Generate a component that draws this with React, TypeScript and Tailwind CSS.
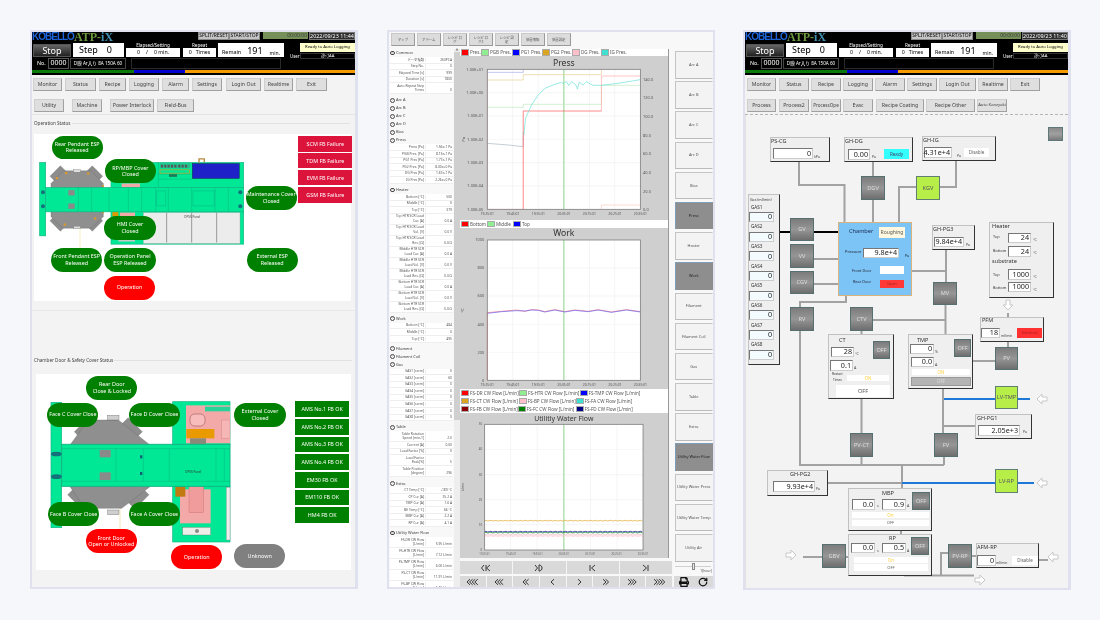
import React from "react";
import { RotateCw } from "lucide-react";
import { FaPrint } from "react-icons/fa";

type R = [number, number, number, number];
const box = (r: R, ox: number, oy: number, s = 1): React.CSSProperties => ({
  left: (r[0] - ox) / s,
  top: (r[1] - oy) / s,
  width: (r[2] - r[0]) / s,
  height: (r[3] - r[1]) / s,
});

function Header({ date }: { date: string }) {
  return (
    <div className="bg-black h-[43px] w-full flex flex-col text-white shrink-0 overflow-hidden">
      <div className="h-[10px] flex items-start">
        <div className="w-[166px] h-[10px] flex items-center font-bold leading-[10px]">
          <span className="text-[10px] text-[#1f63d8] tracking-[-1px] w-[42px] font-['Liberation_Sans',sans-serif]">KOBELLO</span>
          <span className="text-[12px] text-[#6b9a3c] font-['Liberation_Serif',serif]">ATP-<span className="text-[#3f8fb0]">iX</span></span>
        </div>
        <div className="w-[31px] h-[8px] bg-[#c4c4c4] text-black text-[4.9px] flex items-center justify-center border border-[#888] whitespace-nowrap">SPLIT/RESET</div>
        <div className="w-[31px] h-[8px] bg-[#c4c4c4] text-black text-[4.9px] flex items-center justify-center border border-[#888] whitespace-nowrap">START/STOP</div>
        <div className="ml-[3px] w-[45px] h-[7px] bg-[#76905a] text-[#3c3c3c] text-[5px] flex items-center justify-end pr-[1px]">00:00:00</div>
        <div className="ml-[1px] w-[46px] h-[8px] bg-[#2e2e2e] text-white text-[5.4px] flex items-center justify-center border border-[#777] whitespace-nowrap">{date}</div>
      </div>
      <div className="flex h-[27px]">
        <div className="w-[257px] flex flex-col">
          <div className="flex h-[15px] items-end pl-[1px] text-black">
            <div className="w-[38px] h-[13px] bg-gradient-to-b from-[#666] to-[#222] border border-[#555] text-white text-[9px] flex items-center justify-center">Stop</div>
            <div className="ml-[2px] w-[51px] h-[14px] bg-white text-[9px] flex items-center justify-between px-[6px]"><span>Step</span><span className="mr-[6px]">0</span></div>
            <div className="ml-[2px] w-[54px] h-[15px] flex flex-col items-center">
              <span className="text-white text-[4.6px] leading-[6px]">Elapsed/Setting</span>
              <span className="w-full h-[9px] bg-white text-[5.2px] flex items-center justify-center gap-[6px]"><span>0</span><span>/</span><span>0 min.</span></span>
            </div>
            <div className="ml-[3px] w-[33px] h-[15px] flex flex-col items-center">
              <span className="text-white text-[4.6px] leading-[6px]">Repeat</span>
              <span className="w-full h-[9px] bg-white text-[5.2px] flex items-center justify-center gap-[4px]"><span>0</span><span>Times</span></span>
            </div>
            <div className="ml-[2px] w-[66px] h-[14px] bg-white flex items-end justify-between px-[4px] pb-[1px]">
              <span className="text-[5.4px] leading-[7px]">Remain</span>
              <span className="text-[9px] leading-[11px] ml-auto mr-[7px]">191</span>
              <span className="text-[5px] leading-[6px]">min.</span>
            </div>
          </div>
          <div className="flex h-[12px] items-center mt-[0.5px]">
            <span className="ml-[5px] w-[11px] text-[5.4px]">No.</span>
            <div className="w-[21px] h-[11px] border border-[#555] text-[7px] flex items-center justify-center">0000</div>
            <div className="ml-[1px] w-[56px] h-[11px] border border-[#444] text-[4.6px] flex items-center justify-center whitespace-nowrap">D膜 Ar入り 8A 150A 60</div>
            <div className="ml-[5px] w-[150px] h-[11px] border border-[#2a2a2a]" />
          </div>
        </div>
        <div className="flex-1 flex flex-col pt-[1px]">
          <div className="ml-[11px] h-[9px] bg-[#ffffcc] text-black text-[4.2px] flex items-center justify-center whitespace-nowrap">Ready to Auto Logging</div>
          <div className="flex items-center mt-[1px] h-[6px]">
            <span className="ml-[1px] w-[10px] text-[4.4px]">User</span>
            <div className="flex-1 h-[6px] border border-[#333] text-[4.2px] leading-[4px] flex items-center justify-center">ｽﾀｯﾌAA</div>
          </div>
        </div>
      </div>
      <div className="flex h-[3px] mt-[1px] shrink-0">
        <div className="w-[102px] bg-[#0a7a0a]" />
        <div className="w-[51px] bg-[#0000d0]" />
        <div className="flex-1 bg-[#f59a00]" />
      </div>
    </div>
  );
}

const NB0 = "h-[13px] shrink-0 bg-[#dfdfdf] border border-[#cfcfcf] border-r-[#a0a0a0] border-b-[#a0a0a0] text-[#444] flex items-center justify-center whitespace-nowrap";
const NB = NB0 + " text-[5.2px]";

function MachineTop() {
  const m = "#00e896";
  const e = "#12b585";
  return (
    <svg className="absolute inset-0" width={317} height={167} viewBox="27 30 951 500">
      <line x1={165} y1={310} x2={165} y2={375} stroke="#f0e8a0" strokeWidth={2} />
      <g fill="#8d8d8d" stroke="#6f6f6f">
        <rect x={85} y={132} width={38} height={44} transform="rotate(45 104 154)" />
        <rect x={185} y={132} width={38} height={44} transform="rotate(-45 204 154)" />
        <rect x={85} y={270} width={38} height={44} transform="rotate(-45 104 292)" />
        <rect x={185} y={270} width={38} height={44} transform="rotate(45 204 292)" />
      </g>
      <polygon points="115,140 198,140 235,178 235,278 198,312 115,312 78,278 78,178" fill="#8f8f8f" stroke="#666" />
      <rect x={146} y={136} width={20} height={8} fill="#ddd" stroke="#777" />
      <rect x={146} y={306} width={20} height={8} fill="#ddd" stroke="#777" />
      <g fill="#e09a20">
        <rect x={92} y={159} width={7} height={6} />
        <rect x={120} y={144} width={7} height={6} />
        <rect x={186} y={145} width={7} height={6} />
        <rect x={232} y={183} width={5} height={5} />
        <rect x={232} y={262} width={5} height={5} />
        <rect x={207} y={280} width={7} height={6} />
        <rect x={116} y={298} width={7} height={6} />
      </g>
      <rect x={44} y={115} width={18} height={220} fill={m} stroke={e} strokeWidth={2} />
      <rect x={258} y={115} width={398} height={76} fill={m} stroke={e} strokeWidth={2} />
      <path d="M400 115V190M400 165H500M400 150H500" stroke="#0a9a70" fill="none" />
      <rect x={405} y={118} width={90} height={14} fill="#2ab98a" />
      <g fill="#555">{[408, 418, 428, 438, 448, 460, 470, 480].map((x) => <rect key={x} x={x} y={122} width={6} height={8} />)}</g>
      <rect x={405} y={137} width={88} height={10} fill="none" stroke="#e09a20" strokeWidth={2} />
      <rect x={432} y={150} width={24} height={8} fill="#1a7a5a" />
      <rect x={502} y={118} width={141} height={45} fill="#2020c8" stroke="#111" />
      <path d="M522 116V104H538V114" stroke="#b88a40" strokeWidth={4} fill="none" />
      <rect x={290} y={178} width={55} height={12} fill="#f4a9a9" />
      <rect x={258} y={262} width={398} height={98} fill={m} stroke={e} strokeWidth={2} />
      <rect x={355} y={265} width={290} height={93} fill="#ececec" stroke="#999" />
      <path d="M425 265V355M500 265V355M575 265V355" stroke="#9a9a9a" strokeWidth={3} />
      <text x={478} y={283} fontSize={9} fill="#444">DPSS Panel</text>
      <rect x={262} y={263} width={18} height={14} fill="#e09a00" />
      <rect x={285} y={265} width={45} height={12} fill="#f4a9a9" />
      <rect x={280} y={340} width={50} height={12} fill="#c8c8c8" />
      <rect x={62} y={190} width={594} height={73} fill={m} stroke={e} strokeWidth={2} />
      <path d="M160 190V263M200 190V263M252 190V263M310 190V263M350 190V263M392 190V263M430 190V263M500 190V263M570 190V263M610 190V263M504 200H568V245H504ZM395 200H422V245H395Z" stroke="#0c9e75" fill="none" />
      <rect x={130} y={198} width={19} height={16} fill="#8a8a8a" />
      <rect x={130} y={238} width={19} height={16} fill="#8a8a8a" />
      <g fill="#14707a">
        <circle cx={54} cy={204} r={6} /><circle cx={54} cy={246} r={6} /><circle cx={646} cy={204} r={6} /><circle cx={646} cy={246} r={6} />
      </g>
    </svg>
  );
}

function MachineBottom() {
  const m = "#00e896";
  const e = "#12b585";
  return (
    <svg className="absolute inset-0" width={315} height={196} viewBox="33 102 945 588">
      <line x1={285} y1={500} x2={285} y2={600} stroke="#f0d890" strokeWidth={2} />
      <g fill="#8d8d8d" stroke="#666">
        <rect x={150} y={250} width={60} height={30} transform="rotate(-45 180 265)" />
        <rect x={290} y={250} width={60} height={30} transform="rotate(45 320 265)" />
        <rect x={130} y={460} width={60} height={30} transform="rotate(45 160 475)" />
        <rect x={310} y={460} width={60} height={30} transform="rotate(-45 340 475)" />
      </g>
      <polygon points="190,240 280,240 375,315 375,440 290,505 180,505 135,440 135,315" fill="#8f8f8f" stroke="#666" />
      <rect x={248} y={226} width={34} height={14} fill="#cfcfcf" stroke="#555" />
      <rect x={248} y={510} width={34} height={14} fill="#cfcfcf" stroke="#555" />
      <rect x={78} y={187} width={32} height={376} fill={m} stroke={e} strokeWidth={2} />
      <rect x={443} y={185} width={172} height={130} fill={m} stroke={e} strokeWidth={2} />
      <rect x={483} y={196} width={132} height={114} fill="#f4a9a9" />
      <rect x={495} y={222} width={45} height={36} rx={14} fill="#f8bcbc" stroke="#a86060" strokeWidth={2} />
      <rect x={540} y={200} width={75} height={14} fill="#2ad29a" />
      <rect x={590} y={240} width={25} height={55} fill="#f7b6b6" stroke="#c47c7c" />
      <rect x={484} y={267} width={84} height={28} fill="#e89a00" />
      <rect x={495} y={295} width={48} height={18} fill="#8a8a7a" />
      <rect x={443} y={438} width={172} height={168} fill={m} stroke={e} strokeWidth={2} />
      <rect x={465} y={448} width={92} height={102} fill="#f4a9a9" />
      <rect x={492} y={438} width={44} height={80} fill="#f09c9c" stroke="#c06060" />
      <rect x={451} y={440} width={30} height={30} fill="#c07a10" />
      <rect x={473} y={562} width={84} height={23} fill="#eeeee8" stroke="#666" />
      <circle cx={516} cy={573} r={6} fill="#888" />
      <rect x={604} y={442} width={11} height={158} fill="#eee" stroke="#888" />
      <rect x={110} y={313} width={505} height={126} fill={m} stroke={e} strokeWidth={3} />
      <path d="M110 326H615M110 424H615M273 326V424M355 326V424M433 326V424M573 326V424M598 326V424" stroke="#0c9e75" fill="none" />
      <rect x={224} y={330} width={33} height={22} fill="#8a8a8a" />
      <rect x={224} y={397} width={33} height={23} fill="#8a8a8a" />
      <rect x={345} y={346} width={7} height={9} fill="#11607a" />
      <rect x={345} y={396} width={7} height={9} fill="#11607a" />
      <text x={481} y={399} fontSize={9} fill="#333">DPSS Panel</text>
      <g fill="#14707a"><ellipse cx={94} cy={342} rx={16} ry={7} /><ellipse cx={94} cy={410} rx={16} ry={7} /></g>
    </svg>
  );
}

type Pill = { t: string[]; r: R; c?: string };
const top1: Pill[] = [
  { t: ["Rear Pendant ESP", "Released"], r: [80, 35, 233, 106] },
  { t: ["RP/MBP Cover", "Closed"], r: [240, 105, 392, 178] },
  { t: ["Maintenance Cover", "Closed"], r: [662, 185, 815, 257] },
  { t: ["HMI Cover", "Closed"], r: [238, 275, 392, 348] },
  { t: ["Front Pendant ESP", "Released"], r: [78, 372, 232, 443] },
  { t: ["Operation Panel", "ESP Released"], r: [238, 372, 392, 443] },
  { t: ["External ESP", "Released"], r: [665, 372, 818, 443] },
  { t: ["Operation"], r: [237, 455, 390, 527], c: "bg-[#ff0000]" },
];
const bot1: Pill[] = [
  { t: ["Rear Door", "Close &  Locked"], r: [184, 107, 337, 180] },
  { t: ["Face C Cover Close"], r: [67, 188, 220, 260] },
  { t: ["Face D Cover Close"], r: [312, 188, 465, 260] },
  { t: ["External Cover", "Closed"], r: [628, 188, 782, 260] },
  { t: ["Face B Cover Close"], r: [70, 487, 222, 558] },
  { t: ["Face A Cover Close"], r: [312, 487, 465, 558] },
  { t: ["Front Door", "Open or Unlocked"], r: [182, 568, 336, 640], c: "bg-[#ff0000]" },
  { t: ["Operation"], r: [438, 615, 592, 687], c: "bg-[#ff0000]" },
  { t: ["Unknown"], r: [627, 612, 781, 684], c: "bg-[#808080]" },
];
const reds: [string, R][] = [
  ["SCM FB Failure", [820, 36, 982, 83]],
  ["TDM FB Failure", [820, 87, 982, 133]],
  ["EVM FB Failure", [820, 138, 982, 184]],
  ["GSM FB Failure", [820, 190, 982, 236]],
];
const greens: [string, R][] = [
  ["AMS No.1 FB OK", [810, 183, 973, 231]],
  ["AMS No.2 FB OK", [810, 237, 973, 284]],
  ["AMS No.3 FB OK", [810, 290, 973, 337]],
  ["AMS No.4 FB OK", [810, 343, 973, 390]],
  ["EM30 FB OK", [810, 396, 973, 443]],
  ["EM110 FB OK", [810, 449, 973, 495]],
  ["HM4 FB OK", [810, 502, 973, 548]],
];

function PillList({ list, ox, oy }: { list: Pill[]; ox: number; oy: number }) {
  return (
    <>
      {list.map((p) => (
        <div key={p.t.join() + p.r[0]} style={box(p.r, ox, oy, 3)} className={"absolute rounded-full text-white text-[5.4px] leading-[6.5px] flex flex-col items-center justify-center text-center whitespace-nowrap " + (p.c ?? "bg-[#008000]")}>
          {p.t.map((l) => <span key={l}>{l}</span>)}
        </div>
      ))}
    </>
  );
}
function RectList({ list, ox, oy, c }: { list: [string, R][]; ox: number; oy: number; c: string }) {
  return (
    <>
      {list.map(([t, r]) => (
        <div key={t} style={box(r, ox, oy, 3)} className={"absolute text-white text-[5.4px] flex items-center justify-center whitespace-nowrap " + c}>{t}</div>
      ))}
    </>
  );
}

function SectionTitle({ t, w }: { t: string; w: string }) {
  return (
    <div className={"flex items-center h-[8px] ml-[2px] " + w}>
      <span className="text-[4.6px] text-[#444] whitespace-nowrap pr-[1px]">{t}</span>
      <span className="flex-1 h-px bg-[#e2e2e2]" />
    </div>
  );
}

function Panel1() {
  return (
    <div className="w-[328px] h-[559px] border-2 border-r-[3px] border-[#dfe2ee] bg-[#f3f3f3] flex flex-col overflow-hidden shrink-0">
      <Header date="2022/09/23 11:44" />
      <div className="flex gap-[3px] mt-[3px] pl-[1px]">
        <div className={NB + " w-[29px]"}>Monitor</div>
        <div className={NB + " w-[31px]"}>Status</div>
        <div className={NB + " w-[27px]"}>Recipe</div>
        <div className={NB + " w-[30px]"}>Logging</div>
        <div className={NB + " w-[27px]"}>Alarm</div>
        <div className={NB + " w-[30px]"}>Settings</div>
        <div className={NB + " w-[35px] ml-[1px]"}>Login Out</div>
        <div className={NB + " w-[29px]"}>Realtime</div>
        <div className={NB + " w-[31px]"}>Exit</div>
      </div>
      <div className="flex mt-[8px] pl-[2px]">
        <div className={NB + " w-[30px]"}>Utility</div>
        <div className={NB + " w-[30px] ml-[8px]"}>Machine</div>
        <div className={NB + " w-[44px] ml-[8px]"}>Power Interlock</div>
        <div className={NB + " w-[37px] ml-[3px]"}>Field-Bus</div>
      </div>
      <div className="h-px bg-[#e4e4e4] mt-[2px]" />
      <div className="mt-[4px]"><SectionTitle t="Operation Status" w="w-[316px]" /></div>
      <div className="relative bg-white w-[317px] h-[167px] ml-[2px] mt-[7px] shrink-0">
        <MachineTop />
        <PillList list={top1} ox={27} oy={30} />
        <RectList list={reds} ox={27} oy={30} c="bg-[#dc143c]" />
      </div>
      <div className="h-px bg-[#e8e8e8] mt-[9px]" />
      <div className="mt-[45px]"><SectionTitle t="Chamber Door & Safety Cover Status" w="w-[318px]" /></div>
      <div className="relative bg-white w-[315px] h-[196px] ml-[4px] mt-[10px] shrink-0">
        <MachineBottom />
        <PillList list={bot1} ox={33} oy={102} />
        <RectList list={greens} ox={33} oy={102} c="bg-[#008000]" />
      </div>
    </div>
  );
}

type G = { g: string; rows?: [string, string][]; };
const tree: G[] = [
  { g: "Common", rows: [["データ種類", "260PCA"], ["Step No.", "0"], ["Elapsed Time [s]", "999"], ["Duration [s]", "1800"], ["Auto Repeat Step Times", "0"]] },
  { g: "Arc A" }, { g: "Arc B" }, { g: "Arc C" }, { g: "Arc D" }, { g: "Bias" },
  { g: "Press", rows: [["Press [Pa]", "1.56e-1 Pa"], ["PGB Pres. [Pa]", "8.13e-1 Pa"], ["PG1 Pres [Pa]", "1.77e-1 Pa"], ["PG2 Pres. [Pa]", "8.00e+0 Pa"], ["DG Pres [Pa]", "1.67e-1 Pa"], ["IG Pres [Pa]", "2.26e+0 Pa"]] },
  { g: "Heater", rows: [["Bottom [°C]", "500"], ["Middle [°C]", "0"], ["Top [°C]", "379"], ["Top HTR SCR Load Cur. [A]", "0.0 A"], ["Top HTR SCR Load Vol. [V]", "0.0 V"], ["Top HTR SCR Load Res. [Ω]", "0.0 Ω"], ["Middle HTR SCR Load Cur. [A]", "0.0 A"], ["Middle HTR SCR Load Vol. [V]", "0.0 V"], ["Middle HTR SCR Load Res. [Ω]", "0.0 Ω"], ["Bottom HTR SCR Load Cur. [A]", "0.0 A"], ["Bottom HTR SCR Load Vol. [V]", "0.0 V"], ["Bottom HTR SCR Load Res. [Ω]", "0.0 Ω"]] },
  { g: "Work", rows: [["Bottom [°C]", "484"], ["Middle [°C]", "0"], ["Top [°C]", "495"]] },
  { g: "Filament" }, { g: "Filament Coil" },
  { g: "Gas", rows: [["GAS1 [sccm]", "0"], ["GAS2 [sccm]", "60"], ["GAS3 [sccm]", "0"], ["GAS4 [sccm]", "0"], ["GAS5 [sccm]", "0"], ["GAS6 [sccm]", "0"], ["GAS7 [sccm]", "0"], ["GAS8 [sccm]", "0"]] },
  { g: "Table", rows: [["Table Rotation Speed [min-1]", "2.0"], ["Current [A]", "0.00"], ["Load Factor [%]", "0"], ["Load Factor Peak[%]", "5"], ["Table Position [degree]", "296"]] },
  { g: "Extra", rows: [["CT Temp [°C]", "-189 °C"], ["CP Cur [A]", "25.2 A"], ["TMP Cur [A]", "1.6 A"], ["BE Temp [°C]", "66 °C"], ["MBP Cur [A]", "2.2 A"], ["RP Cur [A]", "4.1 A"]] },
  { g: "Utility Water Flow", rows: [["FS-DR CW Flow [L/min]", "5.95 L/min"], ["FS-HTR CW Flow [L/min]", "7.12 L/min"], ["FS-TMP CW Flow [L/min]", "6.00 L/min"], ["FS-CT CW Flow [L/min]", "11.91 L/min"], ["FS-BP CW Flow [L/min]", "5.45 L/min"]] },
];

function Tree() {
  return (
    <div className="w-[65px] h-[539px] overflow-hidden shrink-0 pl-[1px] text-[#555]">
      {tree.map((g) => (
        <div key={g.g}>
          <div className="flex items-center h-[8px] text-[3.9px] font-medium">
            <span className="w-[4.5px] h-[4.5px] rounded-full border-[0.5px] border-[#444] bg-white mr-[1.5px] flex items-center justify-center text-[3px] leading-[3px]">›</span>
            {g.g}
          </div>
          {g.rows && (
            <div className="flex flex-col mb-[2px]">
              {g.rows.map(([l, v]) => (
                <div key={l} className="flex w-[63px] min-h-[6.6px] border-b border-[#eeeeee] bg-white text-[3.3px] leading-[4.4px] items-end py-[0.6px]">
                  <span className="w-[36px] text-right pr-[1px] border-r border-[#eeeeee] px-[3px]">{l}</span>
                  <span className="flex-1 text-right pr-[1px] whitespace-nowrap">{v}</span>
                </div>
              ))}
            </div>
          )}
        </div>
      ))}
    </div>
  );
}

const SW: Record<string, string> = { red: "bg-[#ff0000]", lg: "bg-[#90ee90]", blue: "bg-[#0000ff]", gold: "bg-[#daa520]", pink: "bg-[#ffc0cb]", teal: "bg-[#40e0d0]", dr: "bg-[#8b0000]", dg: "bg-[#008000]", nv: "bg-[#000080]" };

function Lg({ c, t, w }: { c: string; t: string; w: string }) {
  return (
    <div className={"flex items-center shrink-0 " + w}>
      <span className={"w-[8px] h-[6.5px] shrink-0 border-[0.5px] border-[#aaa] mr-[1px] " + SW[c]} />
      <span className="text-[4.6px] leading-[7px] text-[#555] whitespace-nowrap">{t}</span>
    </div>
  );
}

function ChartFrame({ h, vb, children }: { h: string; vb: string; children: React.ReactNode }) {
  return (
    <div className={"bg-[#cfcfcf] w-full shrink-0 " + h}>
      <svg className="w-full h-full block" viewBox={vb} preserveAspectRatio="none">{children}</svg>
    </div>
  );
}

function Grid({ x0, x1, y0, y1, xs, ys }: { x0: number; x1: number; y0: number; y1: number; xs: number[]; ys: number[] }) {
  return (
    <>
      <rect x={x0} y={y0} width={x1 - x0} height={y1 - y0} fill="#fff" />
      {xs.map((x) => <line key={"x" + x} x1={x} x2={x} y1={y0} y2={y1} stroke="#ececec" strokeWidth={1.5} />)}
      {ys.map((y) => <line key={"y" + y} y1={y} y2={y} x1={x0} x2={x1} stroke="#ececec" strokeWidth={1.5} />)}
    </>
  );
}
const TXT = { fill: "#555", fontSize: 12, fontFamily: "Noto Sans" };
const times = ["19:25:01", "19:45:01", "19:55:01", "20:05:01", "20:15:01", "20:25:01", "20:35:01"];

function PressChart() {
  const ys = [203, 273, 343, 413, 483];
  return (
    <ChartFrame h="h-[164px]" vb="225 93 625 492">
      <text x={537} y={122} textAnchor="middle" fontSize={26} fill="#333" fontFamily="Noto Sans">Press</text>
      <Grid x0={307} x1={767} y0={133} y1={553} xs={[383, 460, 614, 690]} ys={ys} />
      <line x1={537} x2={537} y1={133} y2={553} stroke="#a8dca8" strokeWidth={4} />
      <g fill="none" strokeWidth={2}>
        <path d="M307 355L370 360L415 365V320" stroke="#a6b5c4" />
        <path d="M307 247H415V238H650V181H767" stroke="#bde8bd" />
        <path d="M307 165H415V149H650V133" stroke="#e8cf90" />
        <path d="M307 142H415V133" stroke="#a8a8ea" />
        <path d="M650 258V153H767" stroke="#ffa8a8" />
        <path d="M650 553V540H767" stroke="#ffc8c0" />
        <path d="M415 553V258H537H650" stroke="#ff5050" />
        <path d="M307 133V553H415" stroke="#ff9a9a" strokeWidth={1} />
        <path d="M417 330L422 280L440 240L460 210L480 190L510 178L530 172L535 176L545 170L552 182L560 170L572 178L578 192L583 172L595 180L605 170L615 176L625 181L650 181L700 175L767 164" stroke="#66e0d8" />
      </g>
      <rect x={307} y={133} width={460} height={420} fill="none" stroke="#808080" strokeWidth={2.5} />
      {["1.00E+01", "1.00E+00", "1.00E-01", "1.00E-02", "1.00E-03", "1.00E-04", "1.00E-05"].map((t, i) => (
        <text key={t} x={295} y={137 + i * 70} textAnchor="end" {...TXT}>{t}</text>
      ))}
      {["140.0", "120.0", "100.0", "80.0", "60.0", "40.0", "20.0", "0.0"].map((t, i) => (
        <text key={t} x={775} y={167 + i * 56} {...TXT}>{t}</text>
      ))}
      {times.map((t, i) => <text key={t} x={307 + i * 76.7} y={570} textAnchor="middle" fill="#555" fontSize={10} fontFamily="Noto Sans">{t}</text>)}
      <text x={240} y={343} transform="rotate(-90 240 343)" textAnchor="middle" {...TXT}>Pa</text>
    </ChartFrame>
  );
}

function WorkChart() {
  return (
    <ChartFrame h="h-[161px]" vb="225 8 625 483">
      <text x={537} y={33} textAnchor="middle" fontSize={26} fill="#333" fontFamily="Noto Sans">Work</text>
      <Grid x0={307} x1={767} y0={44} y1={465} xs={[383, 460, 614, 690]} ys={[128, 212, 297, 381]} />
      <line x1={537} x2={537} y1={44} y2={465} stroke="#a8dca8" strokeWidth={4} />
      <g fill="none" strokeWidth={2}>
        <path d="M307 465V262" stroke="#ff8080" />
        <path d="M307 262L350 258L395 254L420 258L440 253L460 254L480 259L510 253L540 259L570 254L610 258L640 253L680 260L725 253L767 259" stroke="#ff7070" />
        <path d="M307 264L350 259L395 256L420 257L440 254L460 255L480 260L510 254L540 260L570 255L610 259L640 254L680 261L725 254L767 260" stroke="#6060ff" />
      </g>
      <rect x={307} y={44} width={460} height={421} fill="none" stroke="#808080" strokeWidth={2.5} />
      {["1000", "800", "600", "400", "200", "0"].map((t, i) => <text key={t} x={298} y={48 + i * 84.2} textAnchor="end" {...TXT}>{t}</text>)}
      {times.map((t, i) => <text key={t} x={307 + i * 76.7} y={481} textAnchor="middle" fill="#555" fontSize={10} fontFamily="Noto Sans">{t}</text>)}
      <text x={236} y={255} transform="rotate(-90 236 255)" textAnchor="middle" {...TXT}>°C</text>
    </ChartFrame>
  );
}

function WaterChart() {
  const noisy = (y: number) => {
    let d = `M299 ${y}`;
    for (let x = 303; x <= 775; x += 5) d += `L${x} ${y + (x % 3) - 1}`;
    return d;
  };
  return (
    <ChartFrame h="h-[145px]" vb="225 10 625 435">
      <text x={537} y={35} textAnchor="middle" fontSize={21} fill="#333" fontFamily="Noto Sans">Utilitly Water Flow</text>
      <Grid x0={299} x1={775} y0={44} y1={421} xs={[377, 457, 617, 697]} ys={[119, 195, 270, 345]} />
      <line x1={537} x2={537} y1={44} y2={421} stroke="#a8dca8" strokeWidth={4} />
      <g fill="none" strokeWidth={2.4}>
        <path d={noisy(333)} stroke="#e2b040" />
        <path d={noisy(379)} stroke="#ffc0cb" />
        <path d={noisy(375)} stroke="#e8a0b0" strokeWidth={1.4} />
        <path d={noisy(369)} stroke="#2a9a3a" />
        <path d={noisy(366)} stroke="#1a1a90" />
      </g>
      <rect x={299} y={44} width={476} height={377} fill="none" stroke="#808080" strokeWidth={2.5} />
      {["50", "40", "30", "20", "10", "0"].map((t, i) => <text key={t} x={292} y={47 + i * 75.4} textAnchor="end" fill="#555" fontSize={9} fontFamily="Noto Sans">{t}</text>)}
      {times.map((t, i) => <text key={t} x={299 + i * 79.3} y={437} textAnchor="middle" fill="#666" fontSize={8} fontFamily="Noto Sans">{t}</text>)}
      <text x={238} y={232} transform="rotate(-90 238 232)" textAnchor="middle" fill="#555" fontSize={9} fontFamily="Noto Sans">L/min</text>
    </ChartFrame>
  );
}

const sideBtns = ["Arc A", "Arc B", "Arc C", "Arc D", "Bias", "Press", "Heater", "Work", "Filament", "Filament Coil", "Gas", "Table", "Extra", "Utility Water Flow", "Utility Water Press", "Utility Water Temp", "Utility Air"];
const sel = new Set(["Press", "Work", "Utility Water Flow"]);

function Chev({ n, dir }: { n: number; dir: 1 | -1 }) {
  const w = 3 + (n - 1) * 2.6;
  return (
    <svg width={w + 2} height={8} viewBox={`0 0 ${w + 2} 8`}>
      {Array.from({ length: n }).map((_, i) => {
        const x = 1 + i * 2.6;
        return <path key={i} d={dir === 1 ? `M${x} 1.2L${x + 3} 4L${x} 6.8` : `M${x + 3} 1.2L${x} 4L${x + 3} 6.8`} fill="none" stroke="#222" strokeWidth={0.9} />;
      })}
    </svg>
  );
}
const stepIcons = ["M3 1L0.5 4L3 7M5 1V7M9 1L5.5 4L9 7", "M1 1L3.5 4L1 7M5 1V7M5 1C9 1 9 7 5 7", "M2 1V7M7 1L3.5 4L7 7", "M2 1L5.5 4L2 7M7 1V7"];
const SB = "flex-1 flex items-center justify-center bg-[#d9d9d9] border-r border-[#f5f5f5]";

function Panel2() {
  const tops = ["マップ", "アラーム", "レシピ ログ", "レシピ ログ2", "レシピ 設定", "装置情報", "装置設定"];
  return (
    <div className="w-[328px] h-[559px] border-2 border-[#dfe2ee] bg-[#f8f8f8] flex flex-col overflow-hidden shrink-0 ml-[29px]">
      <div className="flex gap-[2.4px] h-[17px] pl-[2px] pt-[1px] shrink-0">
        {tops.map((t) => (
          <div key={t} className="w-[23.6px] h-[13px] bg-[#dcdcdc] border border-[#c8c8c8] border-r-[#9a9a9a] border-b-[#9a9a9a] text-[3.4px] leading-[4px] text-[#555] flex items-center justify-center text-center px-[3px]">{t}</div>
        ))}
      </div>
      <div className="flex flex-1 min-h-0">
        <Tree />
        <div className="w-[6px] h-[539px] bg-[#eeeeee] shrink-0 flex flex-col">
          <div className="h-[3px] text-[3px] leading-[3px] text-center text-[#888]">▲</div>
          <div className="h-[368px] bg-[#cfcfcf]" />
        </div>
        <div className="flex-1 flex flex-col min-w-0">
          <div className="flex h-[509px] shrink-0">
            <div className="w-[208px] flex flex-col bg-white shrink-0">
              <div className="flex h-[7px] shrink-0 pl-[1px]">
                <Lg c="red" t="Pres." w="w-[20px]" />
                <Lg c="lg" t="PGB Pres." w="w-[31px]" />
                <Lg c="blue" t="PG1 Pres." w="w-[30px]" />
                <Lg c="gold" t="PG2 Pres." w="w-[30px]" />
                <Lg c="pink" t="DG Pres." w="w-[29px]" />
                <Lg c="teal" t="IG Pres." w="w-[30px]" />
              </div>
              <PressChart />
              <div className="flex h-[8px] shrink-0 pl-[1px] items-center">
                <Lg c="red" t="Bottom" w="w-[26px]" />
                <Lg c="lg" t="Middle" w="w-[26px]" />
                <Lg c="blue" t="Top" w="w-[20px]" />
              </div>
              <WorkChart />
              <div className="flex flex-col h-[24px] shrink-0 pl-[1px] justify-center">
                <div className="flex h-[8px] items-center"><Lg c="red" t="FS-DR CW Flow [L/min]" w="w-[58px]" /><Lg c="lg" t="FS-HTR CW Flow [L/min]" w="w-[60.5px]" /><Lg c="blue" t="FS-TMP CW Flow [L/min]" w="w-[60px]" /></div>
                <div className="flex h-[8px] items-center"><Lg c="gold" t="FS-CT CW Flow [L/min]" w="w-[57.5px]" /><Lg c="pink" t="FS-BP CW Flow [L/min]" w="w-[57px]" /><Lg c="teal" t="FS-FA CW Flow [L/min]" w="w-[60px]" /></div>
                <div className="flex h-[8px] items-center"><Lg c="dr" t="FS-FB CW Flow [L/min]" w="w-[56.5px]" /><Lg c="dg" t="FS-FC CW Flow [L/min]" w="w-[58px]" /><Lg c="nv" t="FS-FD CW Flow [L/min]" w="w-[60px]" /></div>
              </div>
              <WaterChart />
            </div>
            <div className="w-[1px] bg-[#999] shrink-0" />
            <div className="w-[37.5px] ml-[6px] flex flex-col gap-[2.7px] shrink-0 pt-[2px]">
              {sideBtns.map((b) => (
                <div key={b} className={"h-[27.5px] shrink-0 border text-[3.9px] flex items-center justify-center text-center whitespace-nowrap " + (sel.has(b) ? "bg-[#8e8e8e] border-[#7f9cb8] border-r-[#8e8e8e] border-b-[#8e8e8e] text-[#222]" : "bg-[#f3f3f3] border-[#c4c4c4] border-r-[#f3f3f3] border-b-[#bbbbbb] text-[#555]")}>{b}</div>
              ))}
            </div>
          </div>
          <div className="flex mt-[3px] flex-1">
            <div className="w-[213px] flex flex-col gap-[2px] shrink-0">
              <div className="flex h-[13px]">
                {stepIcons.map((d) => (
                  <div key={d} className={SB}><svg width={10} height={8} viewBox="0 0 10 8"><path d={d} fill="none" stroke="#222" strokeWidth={0.9} /></svg></div>
                ))}
              </div>
              <div className="flex h-[12px]">
                {[[4, -1], [3, -1], [2, -1], [1, -1], [1, 1], [2, 1], [3, 1], [4, 1]].map(([n, d], i) => (
                  <div key={i} className={SB}><Chev n={n} dir={d as 1 | -1} /></div>
                ))}
              </div>
            </div>
            <div className="flex-1 flex flex-col min-w-0">
              <div className="h-[13px] relative pl-[2px]">
                <div className="h-px bg-[#cfcfcf] mt-[5px] w-[36px]" />
                <div className="absolute left-[19px] top-[2px] w-[3px] h-[7px] bg-[#e8e8e8] border-[0.5px] border-[#888]" />
                <div className="text-[3.4px] leading-[4px] text-right text-[#555] pr-[1px] mt-[2px]">1[hour]</div>
              </div>
              <div className="flex h-[12px] mt-[2px] bg-[#d9d9d9] ml-[1px] items-center justify-around">
                <FaPrint className="w-[10px] h-[10px] text-[#111]" />
                <RotateCw className="w-[10px] h-[10px] text-[#111]" strokeWidth={3} />
              </div>
            </div>
          </div>
        </div>
      </div>
    </div>
  );
}

const OX = 745, OY = 115;
const BOX = "absolute bg-[#efefef] border border-[#c2c2c2] border-r-[#333] border-b-[#333]";
const Inp = ({ r, v, c }: { r: R; v: string; c?: string }) => (
  <div style={box(r, OX, OY)} className={"absolute border border-[#777] border-r-[#ccc] border-b-[#ccc] text-[7.2px] leading-none text-[#222] flex items-center justify-end pr-[1px] " + (c ?? "bg-white")}>{v}</div>
);
const Lb = ({ x, y, t, c }: { x: number; y: number; t: string; c?: string }) => (
  <span style={{ left: x - OX, top: y - OY }} className={"absolute whitespace-nowrap leading-none " + (c ?? "text-[5.5px] text-[#333]")}>{t}</span>
);
const Valve = ({ r, t, on }: { r: R; t: string; on?: boolean }) => (
  <div style={box(r, OX, OY)} className={"absolute border-[1.5px] flex items-center justify-center text-[5.6px] whitespace-nowrap " + (on ? "bg-[#b8ee48] border-[#5f7f70] text-[#556]" : "bg-gradient-to-b from-[#7c7c7c] via-[#969696] to-[#6e6e6e] border-[#567070] text-[#dddddd]")}>{t}</div>
);
const Bar = ({ r, t, c }: { r: R; t: string; c?: string }) => (
  <div style={box(r, OX, OY)} className={"absolute flex items-center justify-center " + (c ?? "bg-white text-[4.5px] text-[#ffd24a]")}>{t}</div>
);

const pipes: string[] = [
  "M798 162V185H843.5V222",
  "M872 162V176M872 200V222",
  "M955 161V187H939M915 187H898V222",
  "M813 259H837M813 284H837",
  "M845 296V302H799V307M799 331V465H943",
  "M911 271H944M945 250V282M944.5 305V334M872 320H944",
  "M860.5 331V334M860.5 399V433M942 389V433",
  "M972 361H994M1007 342V347M1007 313V317M942 426H974",
  "M860.5 457V465M943 457V465M901 465V488M827 483H901M900 531V534",
  "M802 557H821M845 557H847M903 575.5H973M940 575V553H947M971 556H975M1038 560H1047",
];
function arrow(x: number, y: number, d: "l" | "r" | "d") {
  const s = 5;
  if (d === "l") return `M${x - s} ${y}L${x} ${y - s}V${y - 2}H${x + s}V${y + 2}H${x}V${y + s}Z`;
  if (d === "r") return `M${x + s} ${y}L${x} ${y - s}V${y - 2}H${x - s}V${y + 2}H${x}V${y + s}Z`;
  return `M${x} ${y + s}L${x - s} ${y}H${x - 2}V${y - s}H${x + 2}V${y}H${x + s}Z`;
}

function Panel3() {
  const gasY = [212, 231.7, 251.3, 271, 290.5, 310, 330, 349.5];
  return (
    <div className="w-[328px] h-[560px] border-2 border-r-[3px] border-[#dfe2ee] bg-[#f3f3f3] flex flex-col overflow-hidden shrink-0 ml-[28px]">
      <Header date="2022/09/23 11:40" />
      <div className="flex mt-[3px] pl-[2px] gap-[2px]">
        <div className={NB + " w-[29px]"}>Monitor</div>
        <div className={NB + " w-[30px] ml-[1px]"}>Status</div>
        <div className={NB + " w-[30px]"}>Recipe</div>
        <div className={NB + " w-[30px]"}>Logging</div>
        <div className={NB + " w-[30px]"}>Alarm</div>
        <div className={NB + " w-[30px]"}>Settings</div>
        <div className={NB + " w-[37px]"}>Login Out</div>
        <div className={NB + " w-[30px]"}>Realtime</div>
        <div className={NB + " w-[30px]"}>Exit</div>
      </div>
      <div className="flex mt-[8px] pl-[2px] gap-[2px]">
        <div className={NB + " w-[29px]"}>Process</div>
        <div className={NB + " w-[30px] ml-[1px]"}>Process2</div>
        <div className={NB0 + " text-[4.6px] w-[30px]"}>ProcessOpe</div>
        <div className={NB + " w-[30px]"}>Evac</div>
        <div className={NB + " w-[48px] ml-[1px]"}>Recipe Coating</div>
        <div className={NB + " w-[49px]"}>Recipe Other</div>
        <div className={NB0 + " text-[4.2px] w-[30px]"}>Auto Kanzyaki</div>
      </div>
      <div className="border-t border-dashed border-[#b5b5b5] mt-[2px]" />
      <div className="relative flex-1 border-l-[1px] border-[#e3e3e3]">
        <svg className="absolute left-0 top-0" width={323} height={473} viewBox="745 115 323 473">
          <g fill="none" stroke="#a2a2a2" strokeWidth={2}>{pipes.map((d) => <path key={d} d={d} />)}</g>
          <path d="M779 232H837" stroke="#000" strokeWidth={2} />
          <path d="M943 399H1029M901 483H1033" stroke="#1e78d8" strokeWidth={2.2} />
          <g fill="#fff" stroke="#c8c8c8" strokeWidth={1}>
            <path d={arrow(1007, 305, "d")} /><path d={arrow(1041, 399, "l")} /><path d={arrow(1041, 483, "l")} />
            <path d={arrow(790, 555, "r")} /><path d={arrow(979, 580, "r")} /><path d={arrow(1052, 557, "l")} />
          </g>
        </svg>

        <div style={box([1047, 127, 1062, 141], OX, OY)} className="absolute bg-gradient-to-b from-[#8a8a8a] via-[#a0a0a0] to-[#7a7a7a] border border-[#5d7878]" />

        <div style={box([769, 137, 829, 162], OX, OY)} className={BOX} />
        <Lb x={770} y={139} t="PS-CG" />
        <Inp r={[772, 148, 812, 159]} v="0" />
        <Lb x={813} y={155} t="kPa" c="text-[3.5px] text-[#444]" />

        <div style={box([843, 137, 912, 162], OX, OY)} className={BOX} />
        <Lb x={844} y={139} t="GH-DG" />
        <Inp r={[847, 149, 869, 160]} v="0.00" />
        <Lb x={871} y={155} t="Pa" c="text-[3.5px] text-[#444]" />
        <Bar r={[883, 149, 908, 159]} t="Ready" c="bg-[#33ffff] text-[#446] text-[4.5px]" />

        <div style={box([921, 136, 995, 161], OX, OY)} className={BOX} />
        <Lb x={922} y={138} t="GH-IG" />
        <Inp r={[923, 147, 951, 158]} v="4.31e+4" />
        <Lb x={956} y={154} t="Pa" c="text-[3.5px] text-[#444]" />
        <Bar r={[963, 148, 988, 157]} t="Disable" c="bg-white text-[#666] text-[4.5px]" />

        <div style={box([747, 194, 779, 365], OX, OY)} className={BOX} />
        <Lb x={749} y={198} t="Gas (ml/min)" c="text-[3.6px] text-[#333]" />
        {gasY.map((y, i) => (
          <React.Fragment key={y}>
            <Lb x={750} y={y - 7.5} t={"GAS" + (i + 1)} c="text-[4.6px] text-[#333]" />
            <Inp r={[748, y, 773, y + 10]} v="0" c="bg-[#f3fbff]" />
          </React.Fragment>
        ))}

        <Valve r={[860, 176, 884, 200]} t="DGV" />
        <Valve r={[915, 176, 939, 200]} t="KGV" on />
        <Valve r={[789, 218, 813, 241]} t="GV" />
        <Valve r={[789, 244, 813, 268]} t="VV" />
        <Valve r={[789, 271, 813, 294]} t="CGV" />
        <Valve r={[789, 307, 813, 331]} t="RV" />
        <Valve r={[932, 282, 956, 305]} t="MV" />
        <Valve r={[849, 307, 872, 331]} t="CTV" />
        <Valve r={[994, 347, 1017, 370]} t="PV" />
        <Valve r={[994, 386, 1017, 409]} t="LV-TMP" on />
        <Valve r={[849, 433, 872, 457]} t="PV-CT" />
        <Valve r={[933, 433, 957, 457]} t="FV" />
        <Valve r={[994, 469, 1017, 493]} t="LV-RP" on />
        <Valve r={[821, 544, 845, 568]} t="GBV" />
        <Valve r={[947, 544, 971, 568]} t="PV-RP" />

        <div style={box([837, 222, 911, 296], OX, OY)} className="absolute bg-[#7cc4f5] border-[1.5px] border-[#d8b47c]" />
        <Lb x={848} y={229} t="Chamber" c="text-[5.6px] text-[#1a2a55]" />
        <Bar r={[878, 227, 904, 238]} t="Roughing" c="bg-[#fff8e0] text-[#555] text-[5px]" />
        <Lb x={844} y={250} t="Pressure" c="text-[4px] text-[#223]" />
        <Inp r={[862, 248, 898, 258]} v="9.8e+4" />
        <Lb x={904} y={254} t="Pa" c="text-[3.5px] text-[#223]" />
        <Lb x={851} y={269} t="Front Door" c="text-[3.8px] text-[#223]" />
        <Bar r={[879, 266, 903, 274]} t="" />
        <Lb x={852} y={280} t="Rear Door" c="text-[3.8px] text-[#223]" />
        <Bar r={[879, 280, 903, 288]} t="Open" c="bg-[#ff3838] text-[#a02020] text-[3.6px]" />

        <div style={box([931, 225, 974, 250], OX, OY)} className={BOX} />
        <Lb x={932} y={227} t="GH-PG3" />
        <Inp r={[933, 237, 963, 247]} v="9.84e+4" />
        <Lb x={965} y={243} t="Pa" c="text-[3.5px] text-[#444]" />

        <div style={box([988, 222, 1053, 298], OX, OY)} className={BOX} />
        <Lb x={991} y={224} t="Heater" c="text-[5.6px] text-[#333]" />
        <Lb x={992} y={235} t="Top" c="text-[3.8px] text-[#333]" />
        <Inp r={[1007, 233, 1030, 243]} v="24" />
        <Lb x={1032} y={238} t="°C" c="text-[3.6px] text-[#444]" />
        <Lb x={992} y={249} t="Bottom" c="text-[3.8px] text-[#333]" />
        <Inp r={[1007, 246, 1030, 257]} v="24" />
        <Lb x={1032} y={251} t="°C" c="text-[3.6px] text-[#444]" />
        <Lb x={991} y={259} t="substrate" c="text-[5.6px] text-[#333]" />
        <Lb x={992} y={273} t="Top" c="text-[3.8px] text-[#333]" />
        <Inp r={[1007, 269, 1030, 280]} v="1000" />
        <Lb x={1032} y={275} t="°C" c="text-[3.6px] text-[#444]" />
        <Lb x={992} y={286} t="Bottom" c="text-[3.8px] text-[#333]" />
        <Inp r={[1007, 282, 1030, 292]} v="1000" />
        <Lb x={1032} y={288} t="°C" c="text-[3.6px] text-[#444]" />

        <div style={box([827, 334, 893, 399], OX, OY)} className={BOX} />
        <Lb x={838} y={338} t="CT" />
        <Inp r={[830, 347, 853, 357]} v="28" />
        <Lb x={854} y={352} t="°C" c="text-[3.6px] text-[#444]" />
        <Inp r={[829, 360, 852, 371]} v="0.1" />
        <Lb x={853} y={366} t="A" c="text-[3.6px] text-[#444]" />
        <Valve r={[872, 341, 889, 359]} t="OFF" />
        <Lb x={831} y={373} t="Restart" c="text-[3.2px] text-[#333]" />
        <Lb x={832} y={379} t="Times" c="text-[3.2px] text-[#333]" />
        <Bar r={[846, 375, 888, 381]} t="ON" />
        <Bar r={[835, 385, 889, 397]} t="OFF" c="bg-white text-[#555] text-[5.5px]" />

        <div style={box([907, 334, 972, 389], OX, OY)} className={BOX} />
        <Lb x={916} y={338} t="TMP" />
        <Inp r={[909, 344, 933, 354]} v="0" />
        <Lb x={934} y={350} t="%" c="text-[3.6px] text-[#444]" />
        <Inp r={[910, 357, 933, 367]} v="0.0" />
        <Lb x={934} y={363} t="A" c="text-[3.6px] text-[#444]" />
        <Valve r={[953, 339, 970, 357]} t="OFF" />
        <Bar r={[911, 369, 969, 375]} t="ON" />
        <Bar r={[910, 377, 970, 386]} t="OFF" c="bg-[#b4b4b4] border border-[#999] text-[#ddd] text-[4.5px]" />

        <div style={box([979, 317, 1043, 342], OX, OY)} className={BOX} />
        <Lb x={981} y={318} t="PFM" />
        <Inp r={[980, 328, 999, 338]} v="18" />
        <Lb x={1000} y={334} t="ml/min" c="text-[3.4px] text-[#444]" />
        <Bar r={[1016, 328, 1041, 338]} t="Interlock" c="bg-[#ff3030] text-[#a02020] text-[3.8px]" />

        <div style={box([974, 414, 1031, 439], OX, OY)} className={BOX} />
        <Lb x={976} y={416} t="GH-PG1" />
        <Inp r={[977, 425, 1019, 436]} v="2.05e+3" />
        <Lb x={1022} y={430} t="Pa" c="text-[3.5px] text-[#444]" />

        <div style={box([766, 470, 827, 496], OX, OY)} className={BOX} />
        <Lb x={789} y={472} t="GH-PG2" />
        <Inp r={[772, 481, 814, 492]} v="9.93e+4" />
        <Lb x={815} y={487} t="Pa" c="text-[3.5px] text-[#444]" />

        <div style={box([847, 488, 931, 531], OX, OY)} className={BOX} />
        <Lb x={881} y={491} t="MBP" />
        <Inp r={[851, 499, 874, 510]} v="0.0" />
        <Lb x={876} y={504} t="s" c="text-[3.6px] text-[#444]" />
        <Inp r={[881, 499, 905, 510]} v="0.9" />
        <Lb x={906} y={504} t="A" c="text-[3.6px] text-[#444]" />
        <Valve r={[911, 492, 929, 510]} t="OFF" />
        <Bar r={[851, 512, 928, 518]} t="On" />
        <Bar r={[851, 520, 928, 526]} t="OFF" c="bg-white text-[#666] text-[4px]" />

        <div style={box([847, 534, 931, 576], OX, OY)} className={BOX} />
        <Lb x={888} y={536} t="RP" />
        <Inp r={[850, 543, 874, 553]} v="0.0" />
        <Lb x={876} y={549} t="s" c="text-[3.6px] text-[#444]" />
        <Inp r={[881, 543, 905, 553]} v="0.5" />
        <Lb x={906} y={549} t="A" c="text-[3.6px] text-[#444]" />
        <Valve r={[910, 537, 928, 555]} t="OFF" />
        <Bar r={[853, 557, 927, 563]} t="On" />
        <Bar r={[853, 564, 927, 571]} t="OFF" c="bg-white text-[#666] text-[4px]" />

        <div style={box([975, 543, 1038, 568], OX, OY)} className={BOX} />
        <Lb x={976} y={545} t="AFM-RP" />
        <Inp r={[976, 555, 995, 566]} v="0" />
        <Lb x={995} y={561} t="ml/min" c="text-[3.4px] text-[#444]" />
        <Bar r={[1011, 556, 1037, 565]} t="Disable" c="bg-white text-[#666] text-[4.5px]" />
      </div>
    </div>
  );
}

export default function App() {
  return (
    <div className="w-[1100px] h-[620px] bg-[#f5f7fb] flex items-start pt-[30px] pl-[30px] overflow-hidden blur-[0.3px] font-['Noto_Sans','Noto_Sans_CJK_JP',sans-serif]">
      <Panel1 />
      <Panel2 />
      <Panel3 />
    </div>
  );
}
